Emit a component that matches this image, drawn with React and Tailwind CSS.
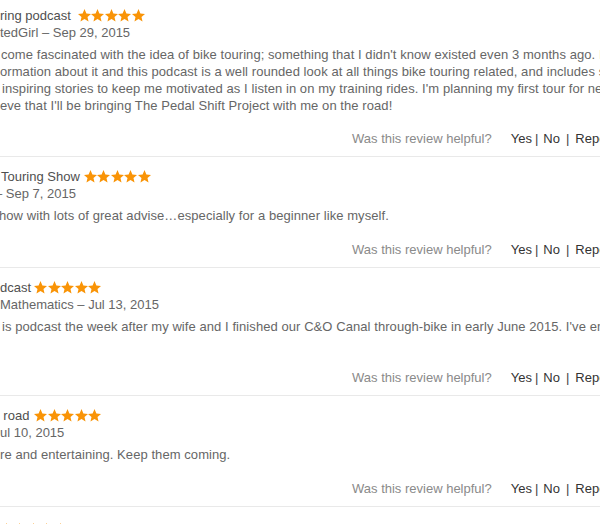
const STAR = 'M12 2l2.9 6.9 7.1.6-5.4 4.7 1.6 7-6.2-3.8-6.2 3.8 1.6-7L2 9.5l7.1-.6z';

function Stars({ className = '' }) {
  return (
    <span className={`flex items-center gap-[0.5px] ${className}`}>
      {[0, 1, 2, 3, 4].map(i => (
        <svg key={i} viewBox="2 2 20 20" className="w-[13px] h-[13px] shrink-0">
          <path d={STAR} fill="#f99407" />
        </svg>
      ))}
    </span>
  );
}

function Helpful({ className = '' }) {
  return (
    <div className={`flex items-center pl-[352px] leading-[17px] whitespace-nowrap ${className}`}>
      <span className="text-[#8a8a8a]">Was this review helpful?</span>
      <span className="ml-[19px] text-[#333]">Yes</span>
      <span className="ml-[3px] text-[#444]">|</span>
      <span className="ml-[5px] text-[#333]">No</span>
      <span className="ml-[6px] text-[#444]">|</span>
      <span className="ml-[6px] text-[#333]">Report a Concern</span>
    </div>
  );
}

const REVIEWS = [
  {
    title: 'ring podcast',
    titleMl: 'ml-0',
    starMl: 'ml-[7px]',
    author: 'tedGirl – Sep 29, 2015',
    authorMl: 'ml-0',
    lines: [
      ['ml-[1px]', "come fascinated with the idea of bike touring; something that I didn't know existed even 3 months ago. I've"],
      ['ml-0', 'ormation about it and this podcast is a well rounded look at all things bike touring related, and includes some'],
      ['ml-[2px]', "inspiring stories to keep me motivated as I listen in on my training rides. I'm planning my first tour for next"],
      ['ml-0', "eve that I'll be bringing The Pedal Shift Project with me on the road!"],
    ],
    top: 'pt-[7px]',
    gap: 'mt-[16px]',
  },
  {
    title: 'Touring Show',
    titleMl: 'ml-[1px]',
    starMl: 'ml-[4px]',
    author: '– Sep 7, 2015',
    authorMl: 'ml-[-5px]',
    lines: [['ml-[-1px]', 'how with lots of great advise…especially for a beginner like myself.']],
    top: 'pt-[11px]',
    gap: 'mt-[17px]',
  },
  {
    title: 'dcast',
    titleMl: 'ml-0',
    starMl: 'ml-[3px]',
    author: 'Mathematics – Jul 13, 2015',
    authorMl: 'ml-0',
    lines: [['ml-[2px]', "is podcast the week after my wife and I finished our C&O Canal through-bike in early June 2015. I've enjoyed"]],
    top: 'pt-[11px]',
    gap: 'mt-[34px]',
  },
  {
    title: 'e road',
    titleMl: 'ml-[-7.5px]',
    starMl: 'ml-[5px]',
    author: 'ul 10, 2015',
    authorMl: 'ml-0',
    lines: [['ml-0', 're and entertaining. Keep them coming.']],
    top: 'pt-[11px]',
    gap: 'mt-[17px]',
  },
];

export default function App() {
  return (
    <div
      className="w-[600px] h-[524px] overflow-hidden bg-white text-[13px]"
      style={{ fontFamily: '"Liberation Sans", Arial, sans-serif' }}
    >
      {REVIEWS.map((r, idx) => (
        <div key={idx} className={`${idx > 0 ? 'border-t border-[#e9e9e9]' : ''} ${r.top} pb-[9px]`}>
          <div className="flex items-center leading-[17px] whitespace-nowrap">
            <span className={`text-[#4f4f4f] ${r.titleMl}`}>{r.title}</span>
            <Stars className={r.starMl} />
          </div>
          <div className={`leading-[17px] text-[#666] whitespace-nowrap ${r.authorMl}`}>{r.author}</div>
          <div className="mt-[5px] text-[#666] leading-[17px] tracking-[0.07px]">
            {r.lines.map(([ml, t], i) => (
              <div key={i} className={`whitespace-nowrap ${ml}`}>{t}</div>
            ))}
          </div>
          <Helpful className={r.gap} />
        </div>
      ))}

      {/* next review, cut off by the window */}
      <div className="border-t border-[#e9e9e9] pt-[16px]">
        <div className="flex items-center leading-[17px]">
          <Stars className="ml-[-0.5px]" />
        </div>
      </div>
    </div>
  );
}
